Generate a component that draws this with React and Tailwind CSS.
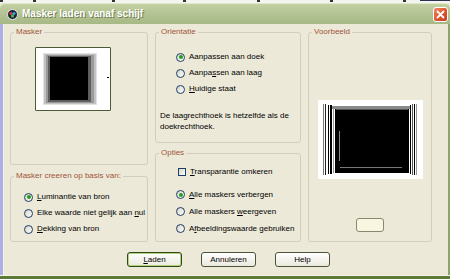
import React from 'react';

const Radio = ({ checked, children, className = 'h-[16px]' }) => (
  <div className={`flex items-center gap-[4px] ${className}`}>
    <span className="flex h-[9px] w-[9px] items-center justify-center rounded-full border border-[#1d3e66] bg-gradient-to-br from-[#d6d4c8] to-white">
      {checked && <span className="h-[4px] w-[4px] rounded-full bg-[#1fa01f]" />}
    </span>
    <span>{children}</span>
  </div>
);

const Group = ({ label, className = '', children }) => (
  <fieldset className={`rounded-[3px] border border-[#d0cfbd] ${className}`}>
    <legend className="ml-[3px] px-[2px] text-[8px] leading-[10px] text-[#a0553a]">{label}</legend>
    {children}
  </fieldset>
);

const Button = ({ primary, children }) => (
  <button
    className={`flex h-[15px] w-[55px] items-center justify-center rounded-[3px] border bg-gradient-to-b from-white to-[#ebe9dd] text-[8px] leading-none text-black ${
      primary
        ? 'border-[#2e4a18] shadow-[inset_0_0_0_1px_#b3d27b]'
        : 'border-[#4c5439]'
    }`}
  >
    {children}
  </button>
);

function MaskThumb() {
  return (
    <div className="ml-[24px] mt-[10px] h-[64px] w-[76px] rounded-[1px] border border-[#4d5a3a]">
      <svg width="74" height="62" viewBox="0 0 74 62">
        <rect width="74" height="62" fill="#fff" />
        <rect x="7" y="5" width="54" height="52" fill="#e2e2e2" />
        <rect x="8" y="6" width="52" height="50" fill="#c2c2c2" />
        <rect x="10" y="7" width="48" height="48" fill="#9a9a9a" />
        <rect x="12" y="8" width="43" height="46" fill="#5e5e5e" />
        <rect x="14" y="9" width="38" height="43" fill="#000" />
        <rect x="71" y="29" width="2" height="1" fill="#000" />
      </svg>
    </div>
  );
}

function Preview() {
  return (
    <svg width="105" height="79" viewBox="0 0 105 79" className="mt-[63px]">
      <rect width="105" height="79" fill="#fff" />
      <rect x="5" y="4" width="1" height="71" fill="#777" />
      <rect x="7" y="4" width="1" height="71" fill="#222" />
      <rect x="10" y="5" width="1" height="69" fill="#000" />
      <rect x="12" y="5" width="2" height="69" fill="#000" />
      <rect x="15" y="6" width="1" height="67" fill="#999" />
      <rect x="17" y="6" width="74" height="67" fill="#000" />
      <rect x="14" y="6" width="78" height="3" fill="#8a8a8a" />
      <rect x="18" y="9" width="72" height="1" fill="#555" />
      <rect x="21" y="31" width="1" height="30" fill="#888" />
      <rect x="22" y="67" width="62" height="1" fill="#777" />
      <rect x="92" y="5" width="1" height="69" fill="#000" />
      <rect x="94" y="4" width="1" height="71" fill="#555" />
      <rect x="96" y="4" width="1" height="71" fill="#000" />
      <rect x="98" y="4" width="1" height="71" fill="#999" />
    </svg>
  );
}

export default function App() {
  return (
    <div
      className="flex h-[279px] w-[450px] flex-col overflow-hidden bg-[#ece9d8] text-[8px] leading-none text-black"
      style={{ fontFamily: '"Liberation Sans", Arial, sans-serif' }}
    >
      {/* strip of the desktop behind the window */}
      <svg width="450" height="3" className="block shrink-0">
        <rect width="450" height="3" fill="#f4f4f0" />
        {[0, 33, 112, 183, 257, 330, 403].map((x) => (
          <rect key={x} x={x} y="0" width="3" height="2" fill="#333" />
        ))}
        <rect x="420" y="0" width="30" height="1" fill="#2a3550" />
      </svg>

      {/* title bar */}
      <div className="flex h-[21px] shrink-0 items-center rounded-t-[5px] border-t border-[#dfe8c8] bg-gradient-to-b from-[#c4d1a2] via-[#b3c393] to-[#a7b986] pl-[7px] pr-[2px]">
        <svg width="11" height="11" viewBox="0 0 11 11">
          <circle cx="5.5" cy="5.5" r="5" fill="#1c2230" stroke="#e8ecf2" strokeWidth="1" />
          <circle cx="4" cy="4.5" r="1.6" fill="#d93a3a" />
          <circle cx="7" cy="4.5" r="1.6" fill="#3aa0e0" />
          <circle cx="5.5" cy="7" r="1.6" fill="#4cc04c" />
        </svg>
        <span
          className="ml-[4px] text-[10px] font-bold text-white"
          style={{ textShadow: '1px 1px 0 #6f7f52' }}
        >
          Masker laden vanaf schijf
        </span>
        <button className="ml-auto flex h-[15px] w-[15px] items-center justify-center rounded-[3px] border border-white bg-gradient-to-br from-[#ef8a67] via-[#e1572e] to-[#c33f1b]">
          <svg width="9" height="9" viewBox="0 0 9 9">
            <path d="M1.5 1.5 L7.5 7.5 M7.5 1.5 L1.5 7.5" stroke="#fff" strokeWidth="1.8" strokeLinecap="round" />
          </svg>
        </button>
      </div>

      {/* window body */}
      <div className="flex flex-1">
        <div className="w-[3px] bg-[#abb1e6]" />
        <div className="flex flex-1 flex-col border-l border-[#f6f4ea] pl-[6px] pt-[3px]">
          <div className="flex h-[215px] gap-[7px]">
            {/* left column */}
            <div className="flex w-[138px] flex-col gap-[6px]">
              <Group label="Masker" className="h-[138px]">
                <MaskThumb />
              </Group>
              <Group label="Masker creeren op basis van:" className="flex-1">
                <div className="mt-[8px] pl-[13px]">
                  <Radio checked>
                    <u>L</u>uminantie van bron
                  </Radio>
                  <Radio>
                    Elke waarde niet gelijk aan <u>n</u>ul
                  </Radio>
                  <Radio>
                    <u>D</u>ekking van bron
                  </Radio>
                </div>
              </Group>
            </div>

            {/* middle column */}
            <div className="flex w-[146px] flex-col gap-[5px]">
              <Group label="Orientatie" className="h-[116px]">
                <div className="mt-[12px] pl-[20px]">
                  <Radio checked>Aanpassen aan doek</Radio>
                  <Radio>
                    Aanpa<u>s</u>sen aan laag
                  </Radio>
                  <Radio>
                    <u>H</u>uidige staat
                  </Radio>
                </div>
                <p className="mt-[13px] pl-[4px] leading-[11px]">
                  De laagrechthoek is hetzelfde als de
                  <br />
                  doekrechthoek.
                </p>
              </Group>
              <Group label="Opties" className="flex-1">
                <div className="mt-[6px] pl-[22px]">
                  <div className="flex h-[16px] items-center gap-[4px]">
                    <span className="h-[8px] w-[8px] border border-[#1d3e66] bg-gradient-to-br from-[#d6d4c8] to-white" />
                    <span>
                      <u>T</u>ransparantie omkeren
                    </span>
                  </div>
                </div>
                <div className="mt-[6px] pl-[20px]">
                  <Radio checked className="h-[17px]">
                    <u>A</u>lle maskers verbergen
                  </Radio>
                  <Radio className="h-[17px]">
                    Alle maskers <u>w</u>eergeven
                  </Radio>
                  <Radio className="h-[17px]">
                    A<u>f</u>beeldingswaarde gebruiken
                  </Radio>
                </div>
              </Group>
            </div>

            {/* right column */}
            <Group label="Voorbeeld" className="flex w-[124px] flex-col items-center">
              <Preview />
              <div className="mt-[39px] h-[14px] w-[28px] rounded-[3px] border border-[#8a876c] bg-[#f8f5e0]" />
            </Group>
          </div>

          <div className="mt-[10px] flex gap-[19px] pl-[117px]">
            <Button primary>
              <u>L</u>aden
            </Button>
            <Button>Annuleren</Button>
            <Button>Help</Button>
          </div>
        </div>
        <div className="w-[2px] bg-[#8ea46a]" />
      </div>

      <div className="h-px bg-[#f4f2e4]" />
      <div className="h-[3px] bg-[#5b7a38]" />
    </div>
  );
}
